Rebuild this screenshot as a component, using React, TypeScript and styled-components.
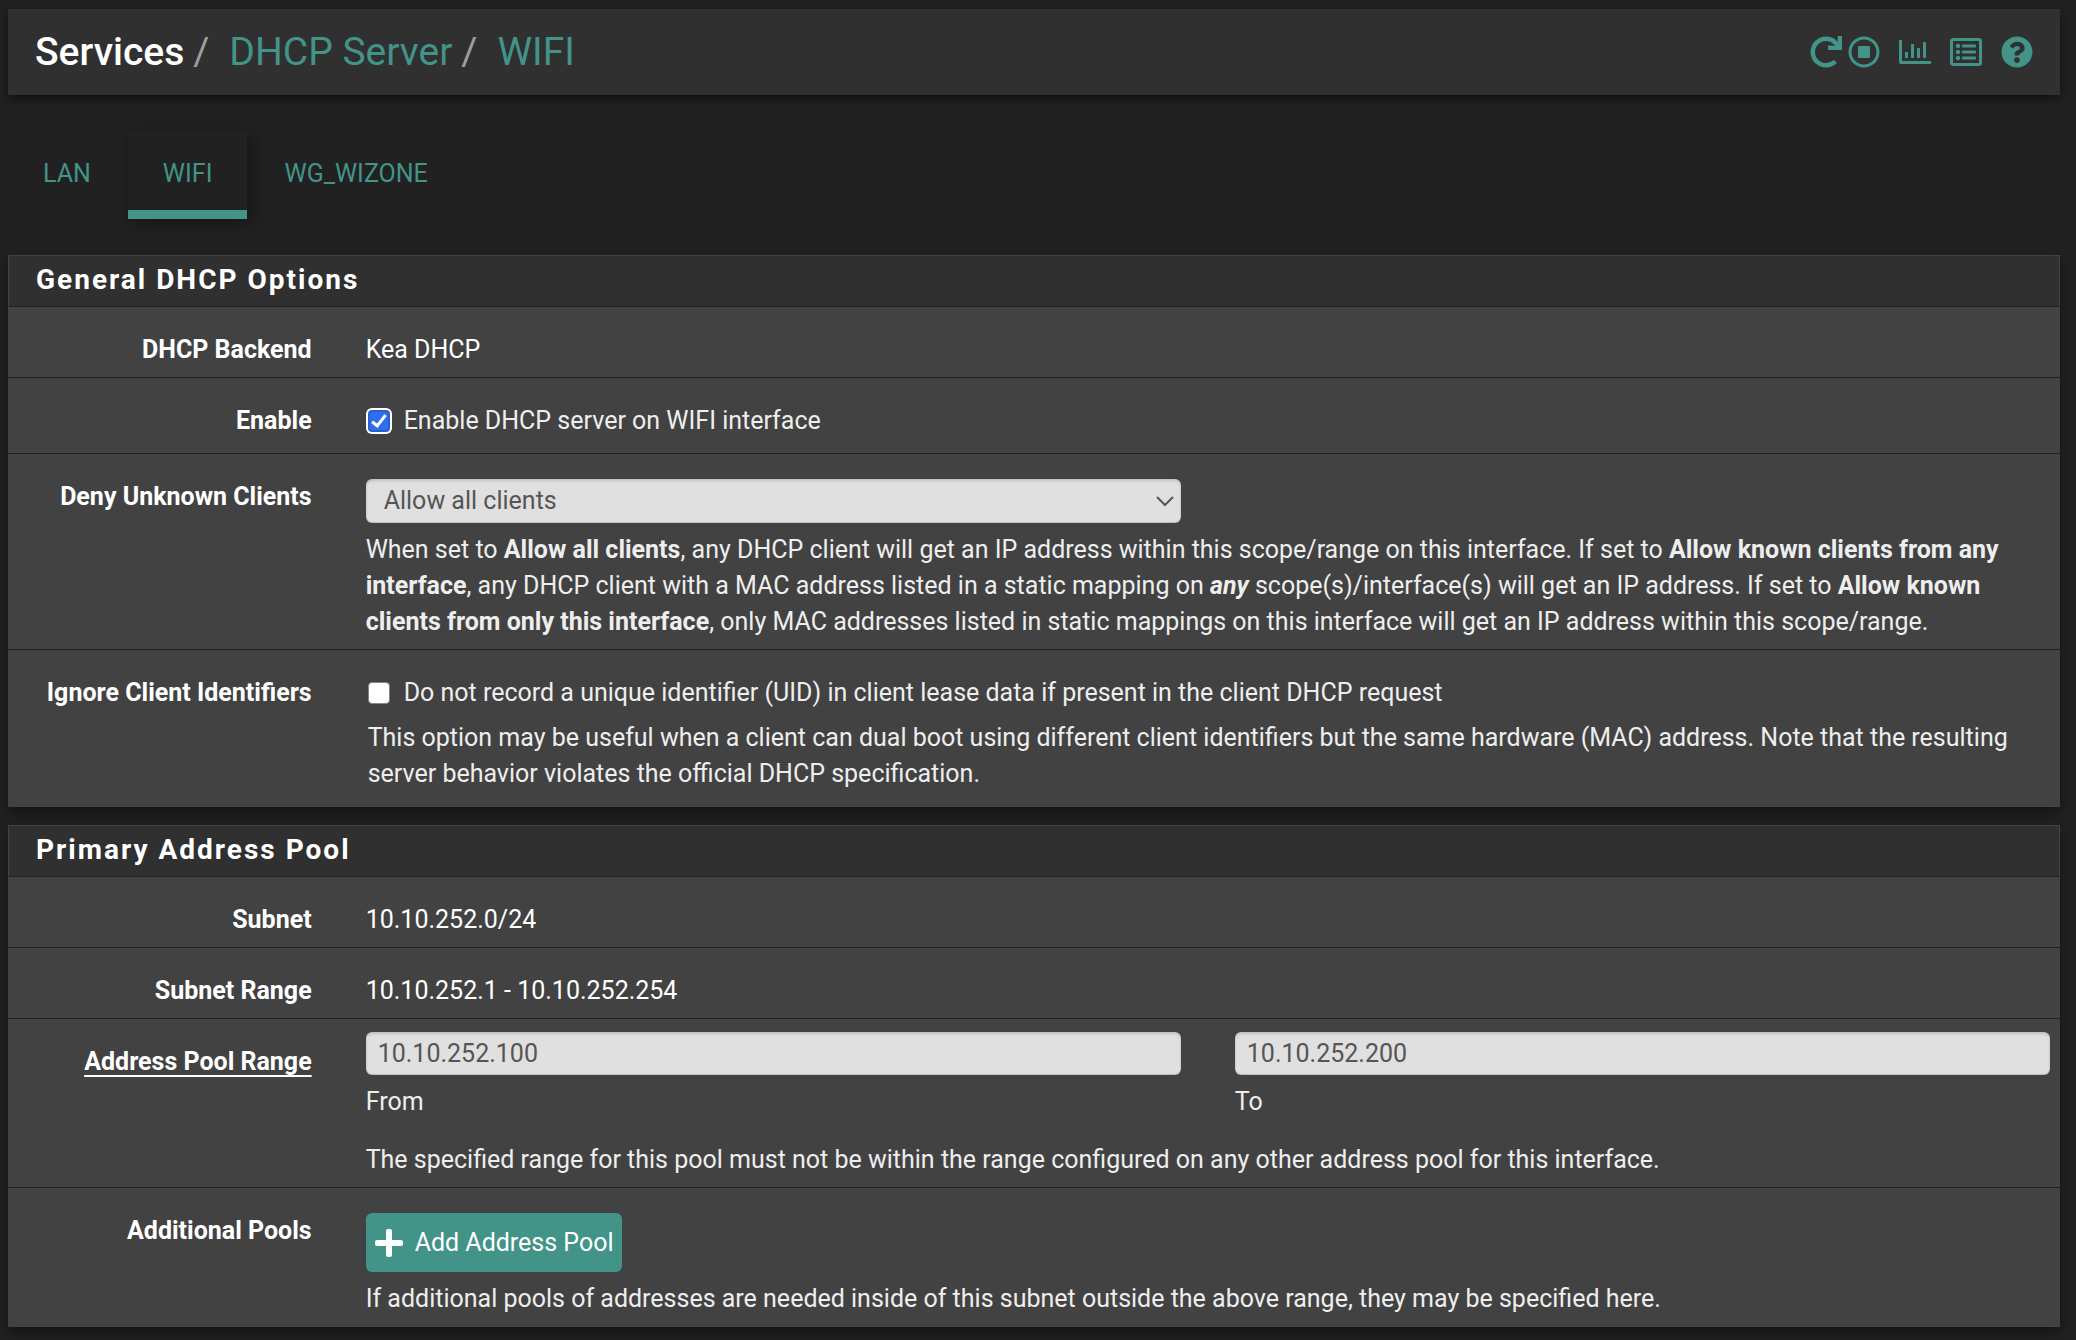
import React, { useState } from "react";
import styled, { createGlobalStyle, css } from "styled-components";
import {
  FaPlus,
  FaQuestionCircle,
  FaRedo,
  FaRegChartBar,
  FaRegListAlt,
  FaRegStopCircle,
} from "react-icons/fa";

const accent = "#429488";

const GlobalStyle = createGlobalStyle`
  *, *::before, *::after { box-sizing: border-box; }
  body {
    margin: 0;
    background: #212121;
    color: #fff;
    font-family: Roboto, "Liberation Sans", sans-serif;
    font-size: 25px;
    line-height: 36px;
    overflow-x: hidden;
  }
  a { color: ${accent}; text-decoration: none; }
`;

const Page = styled.main`
  padding: 9px 16px 13px 8px;
`;

const PageHeader = styled.header`
  display: flex;
  align-items: center;
  justify-content: space-between;
  height: 86px;
  padding: 0 27px;
  background: #303030;
  box-shadow: 0 4px 10px rgba(0, 0, 0, 0.5);
`;

const Breadcrumb = styled.ol`
  display: flex;
  margin: 0;
  padding: 0;
  list-style: none;
  font-size: 39px;
  line-height: 48px;
`;

const Crumb = styled.li`
  &:first-child { font-weight: 500; }
  & + &::before {
    content: "/";
    padding: 0 20px 0 9px;
    color: #9e9e9e;
    font-weight: 400;
  }
`;

const HeaderIcons = styled.nav`
  display: flex;
  align-items: center;
  gap: 19px;
`;

const IconGroup = styled.div`
  display: flex;
  gap: 6px;
`;

const IconLink = styled.a`
  display: flex;
  font-size: 32px;
`;

const Tabs = styled.nav`
  display: flex;
  gap: 2px;
  margin: 36px 0;
`;

const Tab = styled.a<{ $active?: boolean }>`
  height: 88px;
  padding: 25px 35px 0;
  ${(p) =>
    p.$active &&
    css`
      border-bottom: 9px solid ${accent};
      box-shadow: 4px 4px 16px rgba(0, 0, 0, 0.4);
    `}
`;

const Panel = styled.section`
  margin-bottom: 18px;
  background: #424242;
  box-shadow: 0 6px 12px rgba(0, 0, 0, 0.4);
  &:last-child { margin-bottom: 0; }
`;

const PanelTitle = styled.h2`
  margin: 0;
  height: 52px;
  padding: 6px 27px;
  border: 1px solid #424242;
  border-bottom-color: #212121;
  background: #303030;
  font-size: 28px;
  font-weight: 700;
  line-height: 36px;
  letter-spacing: 2px;
`;

const Row = styled.div`
  padding-bottom: 9px;
  border-bottom: 1px solid #212121;
  &:last-child {
    padding-bottom: 10px;
    border-bottom: 0;
  }
`;

const RowGrid = styled.div`
  display: grid;
  grid-template-columns: minmax(0, 2fr) minmax(0, 10fr);
  margin: 0 -17px;
`;

const labelStyle = css`
  padding: 25px 27px 0;
  font-weight: 700;
  text-align: right;
`;

const RowLabel = styled.label<{ $required?: boolean }>`
  ${labelStyle}
  ${(p) =>
    p.$required &&
    css`
      text-decoration: underline 2px;
      text-underline-offset: 5px;
      text-decoration-skip-ink: none;
    `}
`;

const RowTitle = styled.div`
  ${labelStyle}
`;

const Field = styled.div<{ $top?: number }>`
  padding: ${(p) => p.$top ?? 25}px 27px 0;
`;

const Columns = styled.div`
  display: grid;
  grid-template-columns: repeat(2, minmax(0, 1fr));
  column-gap: 54px;
`;

const Help = styled.p<{ $top?: number; $inset?: boolean }>`
  margin: ${(p) => p.$top ?? 9}px 0 0;
  padding: ${(p) => (p.$inset ? "0 0 5px 2px" : "0")};
  color: #eee;
`;

const controlStyle = css`
  display: block;
  width: 100%;
  border: 0;
  border-radius: 6px;
  background: #e0e0e0;
  box-shadow: inset 0 2px 3px rgba(0, 0, 0, 0.15), inset 0 -1px 1px rgba(0, 0, 0, 0.15);
  color: #555;
  font: inherit;
`;

const TextInput = styled.input`
  ${controlStyle}
  height: 43px;
  padding: 0 12px;
`;

const SelectWrap = styled.div`
  position: relative;
  svg {
    position: absolute;
    top: 16px;
    right: 7px;
    pointer-events: none;
  }
`;

const Select = styled.select`
  ${controlStyle}
  appearance: none;
  height: 44px;
  padding: 0 18px;
`;

const CheckLabel = styled.label<{ $tall?: boolean }>`
  display: flex;
  align-items: center;
  gap: 12px;
  height: 36px;
  margin-bottom: ${(p) => (p.$tall ? 5 : 0)}px;
  color: #eee;
`;

const CheckBox = styled.input`
  appearance: none;
  display: grid;
  place-items: center;
  width: 22px;
  height: 22px;
  margin: 0 2px;
  border: 1px solid #858585;
  border-radius: 4px;
  background: #fff;
  &:checked {
    border: 2px solid #2860cc;
    background: #2f6fed;
    box-shadow: 0 0 0 2px #fff;
  }
  &:checked::after {
    content: "";
    width: 8px;
    height: 15px;
    margin-bottom: 4px;
    border: solid #fff;
    border-width: 0 3px 3px 0;
    transform: rotate(38deg);
  }
`;

const AddButton = styled.button`
  display: flex;
  align-items: center;
  gap: 10px;
  height: 59px;
  padding: 0 8px 0 7px;
  border: 0;
  border-radius: 6px;
  background: ${accent};
  color: #fff;
  font: inherit;
  svg { font-size: 32px; }
`;

export default function App() {
  const [enabled, setEnabled] = useState(true);
  const [ignoreUid, setIgnoreUid] = useState(false);

  return (
    <>
      <GlobalStyle />
      <Page>
        <PageHeader>
          <Breadcrumb>
            <Crumb>Services</Crumb>
            <Crumb><a href="#dhcp">DHCP Server</a></Crumb>
            <Crumb><a href="#wifi">WIFI</a></Crumb>
          </Breadcrumb>
          <HeaderIcons>
            <IconGroup>
              <IconLink href="#restart" aria-label="Restart service"><FaRedo /></IconLink>
              <IconLink href="#stop" aria-label="Stop service"><FaRegStopCircle /></IconLink>
            </IconGroup>
            <IconLink href="#status" aria-label="Status"><FaRegChartBar /></IconLink>
            <IconLink href="#logs" aria-label="Logs"><FaRegListAlt /></IconLink>
            <IconLink href="#help" aria-label="Help"><FaQuestionCircle /></IconLink>
          </HeaderIcons>
        </PageHeader>

        <Tabs>
          <Tab href="#lan">LAN</Tab>
          <Tab href="#wifi" $active>WIFI</Tab>
          <Tab href="#wg">WG_WIZONE</Tab>
        </Tabs>

        <Panel>
          <PanelTitle>General DHCP Options</PanelTitle>
          <Row>
            <RowGrid>
              <RowTitle>DHCP Backend</RowTitle>
              <Field>Kea DHCP</Field>
            </RowGrid>
          </Row>
          <Row>
            <RowGrid>
              <RowTitle>Enable</RowTitle>
              <Field>
                <CheckLabel $tall>
                  <CheckBox type="checkbox" checked={enabled} onChange={(e) => setEnabled(e.target.checked)} />
                  Enable DHCP server on WIFI interface
                </CheckLabel>
              </Field>
            </RowGrid>
          </Row>
          <Row>
            <RowGrid>
              <RowLabel htmlFor="deny">Deny Unknown Clients</RowLabel>
              <Field>
                <Columns>
                  <SelectWrap>
                    <Select id="deny" defaultValue="all">
                      <option value="all">Allow all clients</option>
                      <option value="any">Allow known clients from any interface</option>
                      <option value="this">Allow known clients from only this interface</option>
                    </Select>
                    <svg width="18" height="12" viewBox="0 0 18 12" fill="none" stroke="#555" strokeWidth="2">
                      <path d="M1 2l8 8 8-8" />
                    </svg>
                  </SelectWrap>
                </Columns>
                <Help>
                  When set to <b>Allow all clients</b>, any DHCP client will get an IP address within this
                  scope/range on this interface. If set to <b>Allow known clients from any interface</b>, any
                  DHCP client with a MAC address listed in a static mapping on <b><i>any</i></b>{" "}
                  scope(s)/interface(s) will get an IP address. If set to{" "}
                  <b>Allow known clients from only this interface</b>, only MAC addresses listed in static
                  mappings on this interface will get an IP address within this scope/range.
                </Help>
              </Field>
            </RowGrid>
          </Row>
          <Row>
            <RowGrid>
              <RowTitle>Ignore Client Identifiers</RowTitle>
              <Field>
                <CheckLabel>
                  <CheckBox type="checkbox" checked={ignoreUid} onChange={(e) => setIgnoreUid(e.target.checked)} />
                  Do not record a unique identifier (UID) in client lease data if present in the client DHCP request
                </CheckLabel>
                <Help $inset>
                  This option may be useful when a client can dual boot using different client identifiers but
                  the same hardware (MAC) address. Note that the resulting server behavior violates the
                  official DHCP specification.
                </Help>
              </Field>
            </RowGrid>
          </Row>
        </Panel>

        <Panel>
          <PanelTitle>Primary Address Pool</PanelTitle>
          <Row>
            <RowGrid>
              <RowTitle>Subnet</RowTitle>
              <Field>10.10.252.0/24</Field>
            </RowGrid>
          </Row>
          <Row>
            <RowGrid>
              <RowTitle>Subnet Range</RowTitle>
              <Field>10.10.252.1 - 10.10.252.254</Field>
            </RowGrid>
          </Row>
          <Row>
            <RowGrid>
              <RowLabel htmlFor="from" $required>Address Pool Range</RowLabel>
              <Field $top={13}>
                <Columns>
                  <div>
                    <TextInput id="from" aria-describedby="from-help" defaultValue="10.10.252.100" />
                    <Help id="from-help">From</Help>
                  </div>
                  <div>
                    <TextInput aria-label="To" defaultValue="10.10.252.200" />
                    <Help>To</Help>
                  </div>
                </Columns>
                <Help $top={22}>
                  The specified range for this pool must not be within the range configured on any other
                  address pool for this interface.
                </Help>
              </Field>
            </RowGrid>
          </Row>
          <Row>
            <RowGrid>
              <RowTitle>Additional Pools</RowTitle>
              <Field>
                <AddButton type="button"><FaPlus />Add Address Pool</AddButton>
                <Help>
                  If additional pools of addresses are needed inside of this subnet outside the above range,
                  they may be specified here.
                </Help>
              </Field>
            </RowGrid>
          </Row>
        </Panel>
      </Page>
    </>
  );
}
